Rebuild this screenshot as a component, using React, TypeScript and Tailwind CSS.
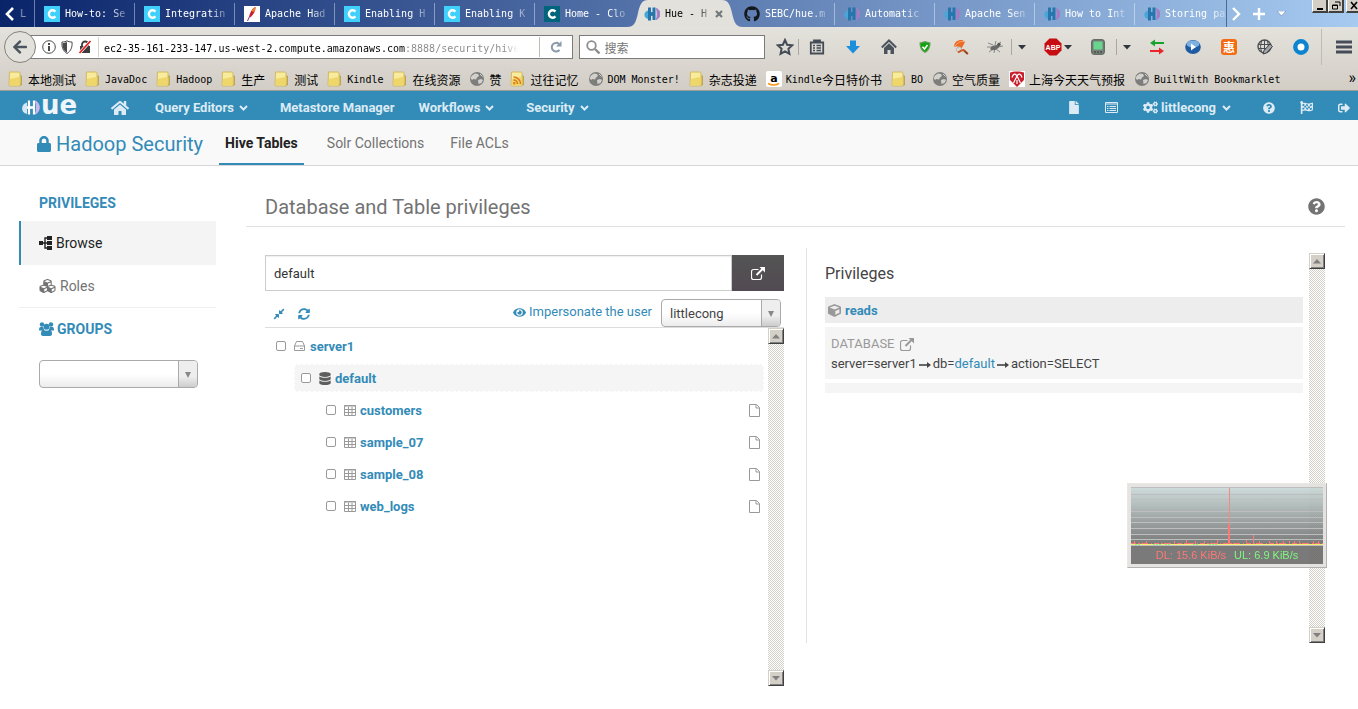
import React, { useState } from "react";
import {
  FaArrowLeft,
  FaCogs,
  FaCompressAlt,
  FaCube,
  FaCubes,
  FaDatabase,
  FaEye,
  FaFile,
  FaFlagCheckered,
  FaGithub,
  FaHome,
  FaLock,
  FaQuestionCircle,
  FaSignOutAlt,
  FaSyncAlt,
} from "react-icons/fa";

/* Latin runs sit in a 6px monospace cell, CJK runs in a 12px cell. */
function Mixed({ text }: { text: string }) {
  const runs = text.match(/[\x00-\x7f]+|[^\x00-\x7f]+/g) ?? [];
  return (
    <span className="flex items-center pt-[2px] whitespace-pre">
      {runs.map((r, i) =>
        r.charCodeAt(0) < 128 ? (
          <span key={i} className="font-['DejaVu_Sans_Mono',monospace] text-[10px]">{r}</span>
        ) : (
          <span key={i} className="font-['Noto_Sans_CJK_SC',sans-serif] text-xs leading-4">{r}</span>
        )
      )}
    </span>
  );
}

/* ---------- favicons ---------- */

const ClouderaIcon = ({ dark = false }: { dark?: boolean }) => (
  <svg viewBox="0 0 16 16" className="size-4 shrink-0">
    <rect width="16" height="16" fill={dark ? "#00657c" : "#3fd0fb"} />
    <path d="M11.4 5.6A3.7 3.7 0 1 0 11.4 10.4" fill="none" stroke="#fff" strokeWidth="2.4" />
  </svg>
);

const FeatherIcon = () => (
  <svg viewBox="0 0 16 16" className="size-4 shrink-0">
    <rect width="16" height="16" fill="#fff" />
    <path d="M11.5 1C8.500 2 6 6 5 11l1 .5C9.500 9 11.700 4.500 11.500 1z" fill="#c8202f" />
    <path d="M11.500 1C10 1.500 8.700 3 7.500 5l2.500 1c1-1.800 1.600-3.500 1.500-5z" fill="#f0842c" />
    <path d="M5.500 10.500L3.500 15" stroke="#8a3080" strokeWidth="1" />
  </svg>
);

const HueIcon = () => (
  <svg viewBox="0 0 16 16" className="size-4 shrink-0">
    <path d="M4.500 4.500C-1 5.500-1 12 4.500 13z" fill="#4aa5d8" />
    <path d="M5.500 1.500v5.500M5.500 9v5.500M10 1.500v12.500" stroke="#2676ad" strokeWidth="3" />
    <path d="M4 8h7" stroke="#2676ad" strokeWidth="3.800" />
    <path d="M12.500 2.500c4.500 2 4.500 9 0 11 1-3.500 1-7.500 0-11z" fill="#a57cc4" stroke="#a57cc4" />
  </svg>
);

type Tab = { title: string; icon: React.ReactNode; active?: boolean };

const TABS: Tab[] = [
  { title: "How-to: Se", icon: <ClouderaIcon /> },
  { title: "Integratin", icon: <ClouderaIcon /> },
  { title: "Apache Had", icon: <FeatherIcon /> },
  { title: "Enabling H", icon: <ClouderaIcon /> },
  { title: "Enabling K", icon: <ClouderaIcon /> },
  { title: "Home - Clo", icon: <ClouderaIcon dark /> },
  { title: "Hue - H", icon: <HueIcon />, active: true },
  { title: "SEBC/hue.m", icon: <FaGithub className="size-4 shrink-0 text-[#14181c]" /> },
  { title: "Automatic", icon: <HueIcon /> },
  { title: "Apache Sen", icon: <HueIcon /> },
  { title: "How to Int", icon: <HueIcon /> },
  { title: "Storing pa", icon: <HueIcon /> },
];

function TabStrip() {
  return (
    <div className="flex h-[27px] bg-[linear-gradient(90deg,#0a246a,#a6caf0)] text-white">
      <button aria-label="Scroll tabs left" className="flex w-5 shrink-0 items-center justify-center">
        <svg viewBox="0 0 10 14" className="h-[14px] w-[10px]"><path d="M8 1L2 7l6 6" fill="none" stroke="#fff" strokeWidth="2.600" /></svg>
      </button>
      <div className="flex w-[15px] shrink-0 items-center border-r border-white/40 font-['DejaVu_Sans_Mono',monospace] text-[10px] text-white/50">L</div>
      <div className="flex min-w-0 flex-1 overflow-hidden">
        {TABS.map((t, i) => (
          <button
            key={t.title}
            className={
              t.active
                ? "relative flex w-[100px] shrink-0 items-center gap-[5px] pl-[9px] text-black"
                : "flex w-[100px] shrink-0 items-center gap-[5px] pl-[9px]"
            }
          >
            {t.active && (
              <svg viewBox="0 0 116 27" className="absolute top-0 -left-2 h-[27px] w-[116px]">
                <path d="M0 27C8 27 9 21 11 13 13 4 15 0 21 0h74c6 0 8 4 10 13 2 8 3 14 11 14z" fill="#e3e1db" />
              </svg>
            )}
            <span className="relative">{t.icon}</span>
            <span className="relative text-left whitespace-pre font-['DejaVu_Sans_Mono',monospace] text-[10px] [mask-image:linear-gradient(90deg,#000_75%,#0005)]">
              {t.title}
            </span>
            {t.active ? (
              <svg viewBox="0 0 8 8" className="relative ml-[3px] size-2"><path d="M1 1l6 6M7 1L1 7" stroke="#737a7a" strokeWidth="2.200" /></svg>
            ) : (
              i !== 5 && <span className="ml-auto h-[22px] w-px bg-white/40" />
            )}
          </button>
        ))}
      </div>
      <div className="flex w-[132px] shrink-0 justify-between border-l border-[#4a6a9a]">
        <div className="flex items-center gap-3 pl-1">
          <svg viewBox="0 0 10 14" className="h-[14px] w-[10px]"><path d="M2 1l6 6-6 6" fill="none" stroke="#fff" strokeWidth="2.400" /></svg>
          <button aria-label="New tab">
            <svg viewBox="0 0 12 12" className="size-3"><path d="M6 0v12M0 6h12" stroke="#fff" strokeWidth="2.400" /></svg>
          </button>
          <svg viewBox="0 0 9 6" className="h-[6px] w-[9px]"><path d="M0 0h9L4.500 5z" fill="#fff" stroke="#56749f" strokeWidth=".5" /></svg>
        </div>
        <div className="flex h-[13px] text-black">
          {[
            <path key="m" d="M4 9h6" stroke="#000" strokeWidth="2" />,
            <path key="r" d="M6 2h5v4M3.500 5h5v4h-5zM3 5.500h6" fill="none" stroke="#000" />,
            <path key="c" d="M4 2l6 7M10 2L4 9" stroke="#000" strokeWidth="1.600" />,
          ].map((p, i) => (
            <button
              key={i}
              aria-label={["Minimize", "Restore", "Close"][i]}
              className={
                i === 2
                  ? "ml-[2px] w-3 overflow-hidden border-b-2 border-l border-b-[#404040] border-l-white bg-[#d4d0c8]"
                  : "w-4 overflow-hidden border-r-2 border-b-2 border-l border-r-[#404040] border-b-[#404040] border-l-white bg-[#d4d0c8]"
              }
            >
              <svg viewBox="0 0 14 11" className="h-[11px] w-[14px]">{p}</svg>
            </button>
          ))}
        </div>
      </div>
    </div>
  );
}

/* ---------- address bar ---------- */

const Caret = () => (
  <svg viewBox="0 0 8 5" className="h-[5px] w-2"><path d="M0 0h8L4 4.500z" fill="#30363c" /></svg>
);

const Divider = () => <span className="h-4 w-px shrink-0 bg-[#aaa7a0]" />;

function Cell({ label, narrow = false, children }: { label: string; narrow?: boolean; children: React.ReactNode }) {
  return (
    <button
      aria-label={label}
      className={narrow ? "flex w-8 shrink-0 items-center justify-center" : "flex w-9 shrink-0 items-center justify-center"}
    >
      {children}
    </button>
  );
}

function Toolbar() {
  return (
    <div className="flex h-10 items-center bg-[linear-gradient(#e4e2dc,#d9d5ce)] pl-1">
      <button aria-label="Back" className="z-10 flex size-8 shrink-0 items-center justify-center rounded-full border border-[#85827c] bg-[#e3e1dc]">
        <FaArrowLeft className="size-4 text-[#4a545e]" />
      </button>
      <div className="-ml-2 flex h-6 min-w-0 flex-[546] items-center border border-[#7b7b7b] bg-white pl-[13px]">
        <svg viewBox="0 0 52 14" className="h-[14px] w-[52px] shrink-0">
          <circle cx="7" cy="7" r="6.300" fill="none" stroke="#4a4a4a" />
          <path d="M7 3v2M7 6v5" stroke="#333" strokeWidth="1.800" />
          <path d="M20 2c2 0 4-.4 5-1.200C26 1.600 28 2 30 2c.5 5-1 9-5 11.500C21 11 19.500 7 20 2z" fill="#fff" stroke="#4a4a4a" />
          <path d="M20.500 3.200c1.500-.1 3-.4 4.500-1.200v10.500c-3.500-2.300-4.700-5-4.500-9.300z" fill="#4a4a4a" />
          <path d="M38 6h10v7H38z" fill="#3c3c3c" />
          <path d="M40 7V4.500a3 3 0 0 1 6 0V7" fill="none" stroke="#3c3c3c" strokeWidth="1.800" />
          <path d="M37.500 13L48.500 1" stroke="#fff" strokeWidth="3" />
          <path d="M37.500 13L48.500 1" stroke="#e02020" strokeWidth="1.800" />
        </svg>
        <span className="mr-[5px] ml-1 h-5 w-px shrink-0 bg-[#d9d0c8]" />
        <input
          aria-label="Address"
          defaultValue="ec2-35-161-233-147.us-west-2.compute.amazonaws.com:8888/security/hive"
          className="min-w-0 flex-1 bg-[linear-gradient(90deg,#000_301px,#888_301px,#888_400px,transparent_414px)] bg-clip-text pt-[2px] font-['DejaVu_Sans_Mono',monospace] text-[10px] text-transparent outline-none"
        />
        <span className="ml-5 h-5 w-px shrink-0 bg-[#b9c0b0]" />
        <button aria-label="Reload" className="flex w-8 shrink-0 justify-center">
          <svg viewBox="0 0 12 12" className="size-3">
            <path d="M9.500 8.800A4.300 4.300 0 1 1 9 3" fill="none" stroke="#8a9aa8" strokeWidth="2" />
            <path d="M11.500 0v5.500H6z" fill="#8a9aa8" />
          </svg>
        </button>
      </div>
      <label className="ml-[6px] flex h-6 min-w-0 flex-[184] items-center gap-[5px] border border-[#7b7b7b] bg-white pl-[6px]">
        <svg viewBox="0 0 14 14" className="size-[14px] shrink-0">
          <circle cx="5.500" cy="5.500" r="4.300" fill="none" stroke="#8e8e8e" strokeWidth="1.800" />
          <path d="M9 9l4.500 4.500" stroke="#8e8e8e" strokeWidth="2.400" />
        </svg>
        <input placeholder="搜索" aria-label="搜索" className="min-w-0 flex-1 pt-[2px] font-['Noto_Sans_CJK_SC',sans-serif] text-xs text-[#555] outline-none placeholder:text-[#757575]" />
      </label>
      <div className="flex shrink-0 items-center pl-[3px]">
        <button aria-label="Bookmark this page" className="flex w-[30px] justify-center pl-1">
          <svg viewBox="0 0 18 18" className="size-[18px]"><path d="M9 2l2.100 4.700 5 .6-3.700 3.500 1 5L9 13.300l-4.400 2.500 1-5L1.900 7.300l5-.6z" fill="none" stroke="#444d56" strokeWidth="2" /></svg>
        </button>
        <Divider />
        <Cell label="Bookmarks">
          <svg viewBox="0 0 16 16" className="size-4"><path d="M5 3V1.500h6V3M1.800 3.500h12.400v11H1.800z" fill="none" stroke="#444d56" strokeWidth="1.800" /><path d="M4 6.500h2M7.500 6.500H12M4 9h2M7.500 9H12M4 11.500h2M7.500 11.500H12" stroke="#444d56" strokeWidth="1.300" /></svg>
        </Cell>
        <Cell label="Downloads">
          <svg viewBox="0 0 16 16" className="size-4"><path d="M5 1.500h6V7h4l-7 7.500L1 7h4z" fill="#1c8fdc" /></svg>
        </Cell>
        <Cell label="Home">
          <svg viewBox="0 0 16 16" className="size-4"><path d="M.8 8.500L8 1.500l7.200 7" fill="none" stroke="#4b545c" strokeWidth="2" /><path d="M3 9l5-4.800L13 9v6H9.500v-4h-3v4H3z" fill="#4b545c" /></svg>
        </Cell>
        <Cell label="Site safety">
          <svg viewBox="0 0 12 12" className="size-3"><path d="M6 0l5.500 1.500C11.500 7 10 10 6 12 2 10 .5 7 .5 1.500z" fill="#6aa05c" /><path d="M6 1.200l4.400 1.200C10.300 6.500 9 9 6 10.700 3 9 1.700 6.500 1.600 2.400z" fill="#12a212" /><path d="M3.500 5.800L5.500 8l3-4" fill="none" stroke="#fff" strokeWidth="1.500" /></svg>
        </Cell>
        <Cell label="Search helper">
          <svg viewBox="0 0 16 16" className="size-4"><path d="M1 8C1 3 5 .5 9.500 1L12 3 8.500 9.500C6 7.500 3.500 7 1 8z" fill="#ee6a24" /><path d="M1.500 7.500C5 3 8 2 11 2.500" fill="none" stroke="#fbb27c" /><circle cx="6" cy="10.500" r="2.600" fill="#ddd8d0" stroke="#b9b4ac" /><path d="M5 13.500C8 11.500 9 11 10.500 11l4.500 4" fill="none" stroke="#d0561f" strokeWidth="2" /><path d="M11.500 12l3 3" stroke="#7a4428" strokeWidth="1.400" /></svg>
        </Cell>
        <Cell label="Firebug" narrow>
          <svg viewBox="0 0 16 14" className="h-[14px] w-4"><path d="M1 3l5 2M0 7h5M2 12l4-3M9 1L8 5M14 2l-4 3M16 6l-5 1M13 12l-4-3M7 13l1-4" stroke="#888" /><ellipse cx="7.500" cy="7.500" rx="4.500" ry="2.200" fill="#6a6a6a" transform="rotate(-20 8 7)" /><circle cx="12" cy="4.500" r="1.700" fill="#555" /></svg>
        </Cell>
        <Divider />
        <button aria-label="Firebug menu" className="flex w-[22px] justify-center pr-[3px]"><Caret /></button>
        <button aria-label="Adblock" className="flex w-[46px] items-center gap-[2px] pl-[10px]">
          <svg viewBox="0 0 18 18" className="size-[18px]"><path d="M5.500.5h7l5 5v7l-5 5h-7l-5-5v-7z" fill="#c70d12" /><text x="9" y="12" textAnchor="middle" fontSize="7" fontWeight="700" fill="#fff" fontFamily="Liberation Sans, sans-serif">ABP</text></svg>
          <Caret />
        </button>
        <Cell label="Device view">
          <svg viewBox="0 0 14 16" className="h-4 w-[14px]"><rect x=".7" y=".7" width="12.600" height="14.600" rx="2" fill="#77827a" stroke="#4f5852" /><rect x="2.500" y="2.500" width="9" height="8" fill="#68d68c" /><path d="M3 13h2M6 13h2M9 13h2" stroke="#333" /></svg>
        </Cell>
        <Divider />
        <button aria-label="Device menu" className="flex w-[22px] justify-center pr-[3px]"><Caret /></button>
        <Cell label="Proxy">
          <svg viewBox="0 0 14 16" className="h-4 w-[14px]"><path d="M4 4h10" stroke="#18a42c" strokeWidth="2" /><path d="M0 12h10" stroke="#e8262c" strokeWidth="2" /><path d="M0 4l5-3.500v7z" fill="#18a42c" /><path d="M14 12L9 8.500v7z" fill="#e8262c" /></svg>
        </Cell>
        <Cell label="Video">
          <svg viewBox="0 0 16 16" className="size-4"><ellipse cx="8" cy="8" rx="7.800" ry="7" fill="#1f5ba0" /><ellipse cx="8" cy="5" rx="6.500" ry="3.500" fill="#7eb0e2" /><path d="M6 4.500l5 3.500-5 3.500z" fill="#fff" /></svg>
        </Cell>
        <Cell label="Deals">
          <span className="flex size-4 items-center justify-center rounded-[3px] bg-[#f36c12] font-['Noto_Sans_CJK_SC',sans-serif] text-xs leading-4 font-bold text-white">惠</span>
        </Cell>
        <Cell label="Web tools">
          <svg viewBox="0 0 16 16" className="size-4"><circle cx="7.500" cy="7.500" r="6.500" fill="none" stroke="#4b4f54" strokeWidth="1.400" /><path d="M1 5.500h13M1 9.500h13M7.500 1v13M4.500 2Q2.500 7.500 4.500 13M10.500 2q2 5.500 0 11" fill="none" stroke="#4b4f54" /><path d="M6 15l1-3.500L13 5l2.500 2.500-6 6.500z" fill="#a3a5a7" stroke="#3c4044" /></svg>
        </Cell>
        <Cell label="Sync">
          <svg viewBox="0 0 16 16" className="size-4"><circle cx="8" cy="8" r="5.700" fill="#fff" stroke="#0c84cf" strokeWidth="4.400" /></svg>
        </Cell>
        <span className="ml-[2px] h-9 w-px bg-[#c0bcb4]" />
        <button aria-label="Open menu" className="flex w-9 justify-center pl-2">
          <svg viewBox="0 0 16 14" className="h-[14px] w-4"><path d="M0 2h16M0 7h16M0 12h16" stroke="#464c58" strokeWidth="3" /></svg>
        </button>
      </div>
    </div>
  );
}

/* ---------- bookmarks ---------- */

const Folder = ({ feed = false }: { feed?: boolean }) => (
  <svg viewBox="0 0 16 16" className="size-4 shrink-0">
    <path d="M11 5h2.500v9H11z" fill="#e2c65a" stroke="#b89a38" strokeWidth=".8" />
    <path d="M1.500 1h9.500c.6 0 1 .4 1 1v13h-10c-.6 0-1-.4-1-1z" fill="#f8eb9c" stroke="#cfb459" strokeWidth=".9" />
    <path d="M2 8l9-2v8H2z" fill="#eed668" />
    {feed && (
      <g fill="none" stroke="#e07a18" strokeWidth="1.600">
        <path d="M3.500 6a7 7 0 0 1 7 7M3.500 9a4 4 0 0 1 4 4" />
        <circle cx="4.300" cy="12.300" r=".5" />
      </g>
    )}
  </svg>
);

const Globe = () => (
  <svg viewBox="0 0 16 16" className="size-4 shrink-0">
    <circle cx="8" cy="8" r="7" fill="#7d7d7b" />
    <path d="M3 4.500l3-2 3 .5 1 2-2 1.500-1 2-2.500-.5L3 9 1.500 7zM9 9l3-1 2 1-1.500 3L9.500 13z" fill="#d3d1cc" />
    <path d="M11 3l2.500 2.500" stroke="#d3d1cc" />
  </svg>
);

const Amazon = () => (
  <svg viewBox="0 0 16 16" className="size-4 shrink-0">
    <rect width="16" height="16" rx="2" fill="#fff" />
    <text x="8" y="11" textAnchor="middle" fontSize="11" fontWeight="700" fontFamily="DejaVu Sans, sans-serif">a</text>
    <path d="M2 12.500q6 3 11 0" fill="none" stroke="#f79a1d" strokeWidth="1.500" />
  </svg>
);

const Weather = () => (
  <svg viewBox="0 0 16 16" className="size-4 shrink-0">
    <rect width="16" height="16" fill="#fff" />
    <path d="M1 1.500C4 0 12 0 15 1.500V9l-7 7L1 9z" fill="#c91f2c" />
    <path d="M3 6.500C4 2.500 6.500 2 8 5c1.500-3 4-2.500 5 1.500M8 5L4.500 12M8 5l3.500 7M8 9v4" fill="none" stroke="#fff" strokeWidth="1.200" />
  </svg>
);

const BOOKMARKS: { text: string; icon: React.ReactNode }[] = [
  { text: "本地测试", icon: <Folder /> },
  { text: "JavaDoc", icon: <Folder /> },
  { text: "Hadoop", icon: <Folder /> },
  { text: "生产", icon: <Folder /> },
  { text: "测试", icon: <Folder /> },
  { text: "Kindle", icon: <Folder /> },
  { text: "在线资源", icon: <Folder /> },
  { text: "赞", icon: <Globe /> },
  { text: "过往记忆", icon: <Folder feed /> },
  { text: "DOM Monster!", icon: <Globe /> },
  { text: "杂志投递", icon: <Folder /> },
  { text: "Kindle今日特价书", icon: <Amazon /> },
  { text: "BO", icon: <Folder /> },
  { text: "空气质量", icon: <Globe /> },
  { text: "上海今天天气预报", icon: <Weather /> },
  { text: "BuiltWith Bookmarklet", icon: <Globe /> },
];

function BookmarkBar() {
  return (
    <div className="flex h-6 items-center border-b border-[#9b9c9a] bg-[linear-gradient(#d9d5ce,#d2cec6)] pr-[2px] pl-2">
      <div className="flex min-w-0 flex-1 gap-[9px] overflow-hidden">
        {BOOKMARKS.map((b) => (
          <a key={b.text} href="#" className="flex shrink-0 items-center gap-1 text-black">
            {b.icon}
            <Mixed text={b.text} />
          </a>
        ))}
      </div>
      <button aria-label="More bookmarks" className="pb-[2px] text-base leading-4">»</button>
    </div>
  );
}

/* ---------- page icons ---------- */

const Chevron = () => (
  <svg viewBox="0 0 9 9" className="size-[9px]"><path d="M1 3l3.500 3.500L8 3" fill="none" stroke="currentColor" strokeWidth="2" /></svg>
);

const ListIcon = () => (
  <svg viewBox="0 0 13 11" className="h-[11px] w-[13px]">
    <path d="M.5.5h12v10H.5zM.5 2h12" fill="none" stroke="currentColor" />
    <path d="M2 4.500h1.500M4.500 4.500H11M2 6.500h1.500M4.500 6.500H11M2 8.500h1.500M4.500 8.500H11" stroke="currentColor" />
  </svg>
);

const LinkOut = () => (
  <svg viewBox="0 0 14 13" className="h-[13px] w-[14px]">
    <path d="M7.500 2.500H2.500a2 2 0 0 0-2 2v6a2 2 0 0 0 2 2h6a2 2 0 0 0 2-2V7.500" fill="none" stroke="currentColor" strokeWidth="1.200" />
    <path d="M5.500 8L11.500 2" stroke="currentColor" strokeWidth="2" />
    <path d="M8.500 0H14v5.500z" fill="currentColor" />
  </svg>
);

const TreeIcon = () => (
  <svg viewBox="0 0 13 14" className="h-[14px] w-[13px]">
    <path d="M0 5h4v4H0zM8 0h5v4H8zM8 5h5v4H8zM8 10h5v4H8z" fill="currentColor" />
    <path d="M4 7h4M8 2H6v10h2" fill="none" stroke="currentColor" strokeWidth="1.400" />
  </svg>
);

const GroupIcon = () => (
  <svg viewBox="0 0 15 14" className="h-[14px] w-[15px]" fill="currentColor">
    <circle cx="3" cy="2.500" r="2.200" />
    <circle cx="12" cy="2.500" r="2.200" />
    <path d="M0 8.500C0 6.500.5 5 1.500 5H4l1.500 3.500zM15 8.500C15 6.500 14.500 5 13.500 5H11L9.500 8.500z" />
    <circle cx="7.500" cy="4.800" r="3" />
    <path d="M2 12c0-3 1-4.300 2.500-4.300C6 9 9 9 10.500 7.700 12 7.700 13 9 13 12c0 1.300-.8 2-2 2H4c-1.200 0-2-.7-2-2z" />
  </svg>
);

const GridIcon = () => (
  <svg viewBox="0 0 12 11" className="h-[11px] w-3">
    <path d="M.5.5h11v10H.5zM0 1h12M.5 4.500h11M.5 7.500h11M4.500 2v8.500M8 2v8.500" fill="none" stroke="#999" />
  </svg>
);

const PageIcon = () => (
  <svg viewBox="0 0 11 13" className="h-[13px] w-[11px]">
    <path d="M.5.5h7l3 3v9H.5zM7 .5V4h3.500" fill="none" stroke="#999" />
  </svg>
);

const DriveIcon = () => (
  <svg viewBox="0 0 11 10" className="h-[10px] w-[11px]">
    <path d="M.5 5L2.500.5h6L10.500 5v4.500H.5zM.5 5h10" fill="none" stroke="#999" />
    <path d="M6 7.500h3" stroke="#999" />
  </svg>
);

const DatabaseIcon = () => <FaDatabase className="h-[13px] w-3 text-[#5e5e5e]" />;

const ArrowIcon = () => (
  <svg viewBox="0 0 12 6" className="mx-[2px] mt-px h-[6px] w-3"><path d="M0 3h9" stroke="currentColor" strokeWidth="1.600" /><path d="M8 0l4 3-4 3z" fill="currentColor" /></svg>
);

/* ---------- Hue ---------- */

function HueLogo() {
  return (
    <a href="#" aria-label="Hue home" className="flex w-14 items-center">
      <svg viewBox="0 0 19 15" className="h-[15px] w-[19px] shrink-0">
        <path d="M5 2.500C-1.500 4-1.500 13 5 14z" fill="#d6e8f4" />
        <path d="M7 .5v14M12 .5v14" stroke="#fff" strokeWidth="2.200" />
        <path d="M5 7.500h7" stroke="#fff" strokeWidth="2.600" />
        <path d="M13.500 1c5 2.500 5 10.500 0 13 1.400-4 1.400-9 0-13z" fill="#cbb9ee" stroke="#cbb9ee" />
      </svg>
      <span className="-mt-[5px] font-['DejaVu_Sans',sans-serif] text-[26px] leading-5 font-bold text-[#eef6fb]">ue</span>
    </a>
  );
}

function NavLink({ children, menu = false }: { children: React.ReactNode; menu?: boolean }) {
  return (
    <a href="#" className={menu ? "flex items-center gap-[5px] pr-5 pl-3" : "flex items-center px-3"}>
      {children}
      {menu && <Chevron />}
    </a>
  );
}

function HueNav() {
  return (
    <nav className="flex h-[29px] items-center bg-[#338bb8] pt-1 pr-2 pl-[22px] text-[13px] font-bold text-[#dcebf4]">
      <HueLogo />
      <a href="#" aria-label="Home" className="mr-[14px] ml-[33px]"><FaHome className="size-[18px]" /></a>
      <NavLink menu>Query Editors</NavLink>
      <NavLink>Metastore Manager</NavLink>
      <NavLink menu>Workflows</NavLink>
      <NavLink menu>Security</NavLink>
      <div className="ml-auto flex items-center">
        <a href="#" aria-label="Documents" className="mr-6"><FaFile className="h-[13px] w-[14px]" /></a>
        <a href="#" aria-label="Jobs" className="mr-[25px]"><ListIcon /></a>
        <a href="#" className="flex items-center">
          <FaCogs className="size-[15px]" />
          <span className="mr-[6px] ml-[3px]">littlecong</span>
          <Chevron />
        </a>
        <a href="#" aria-label="Help" className="ml-8"><FaQuestionCircle className="size-3" /></a>
        <a href="#" aria-label="Tour" className="ml-[25px]"><FaFlagCheckered className="size-[13px]" /></a>
        <a href="#" aria-label="Sign out" className="ml-[25px]"><FaSignOutAlt className="size-3" /></a>
      </div>
    </nav>
  );
}

function SubNav() {
  return (
    <header className="flex h-[46px] border-b border-[#d8d8d8] bg-[#f9f9f9] pl-9 text-sm">
      <h1 className="mr-[16px] flex items-center gap-1 pt-[3px] text-xl text-[#338bb8]">
        <FaLock className="size-4" />
        Hadoop Security
      </h1>
      <a href="#" className="flex items-center border-b-2 border-[#338bb8] px-[6px] pt-[3px] font-bold text-[#222]">Hive Tables</a>
      <a href="#" className="ml-[23px] flex items-center pt-px text-[#737373]">Solr Collections</a>
      <a href="#" className="ml-[26px] flex items-center pt-px text-[#737373]">File ACLs</a>
    </header>
  );
}

function Picker({ label, options, wide = false }: { label: string; options: string[]; wide?: boolean }) {
  return (
    <span className={wide ? "relative flex h-7 w-[159px]" : "relative flex h-7 w-[120px]"}>
      <select
        aria-label={label}
        className="w-full appearance-none rounded border border-[#aaa] bg-[linear-gradient(#fff_50%,#ececec)] pt-px pr-5 pl-2 text-[13px] text-[#444] outline-none"
      >
        {options.map((o) => (
          <option key={o}>{o}</option>
        ))}
      </select>
      <span className="pointer-events-none absolute inset-y-px right-px flex w-[19px] items-center justify-center rounded-r-[3px] border-l border-[#aaa] bg-[linear-gradient(#eee_60%,#ccc)]">
        <svg viewBox="0 0 6 6" className="mt-[2px] size-[6px]"><path d="M0 0h6L3 6z" fill="#888" /></svg>
      </span>
    </span>
  );
}

function Sidebar() {
  return (
    <aside className="w-[197px] shrink-0 pt-[18px] text-sm">
      <h2 className="flex h-[37px] items-center pl-5 font-bold text-[#338bb8]">PRIVILEGES</h2>
      <a href="#" className="flex h-11 items-center gap-1 border-l-2 border-[#338bb8] bg-[#f4f4f4] pl-[18px] text-[#222]">
        <TreeIcon />
        Browse
      </a>
      <a href="#" className="flex h-[43px] items-center gap-1 border-b border-[#f0f0f0] pl-5 text-[#737373]">
        <FaCubes className="h-4 w-[17px]" />
        Roles
      </a>
      <h2 className="flex h-[42px] items-center gap-[3px] pl-5 font-bold text-[#338bb8]">
        <GroupIcon />
        GROUPS
      </h2>
      <div className="mt-[10px] pl-5"><Picker label="Group" options={[""]} wide /></div>
    </aside>
  );
}

function ScrollBar({ name }: { name: string }) {
  const end = "flex size-4 shrink-0 items-center justify-center border border-t-[#d4d0c8] border-l-[#d4d0c8] border-r-[#404040] border-b-[#404040] bg-[#d4d0c8] shadow-[inset_1px_1px_#fff,inset_-1px_-1px_#808080]";
  return (
    <div className="flex w-4 shrink-0 flex-col">
      <button aria-label="Scroll up" className={end}><svg viewBox="0 0 8 5" className="h-[5px] w-2"><path d="M0 4.500h8L4 0z" fill="#808080" /></svg></button>
      <svg className="min-h-0 w-4 flex-1" shapeRendering="crispEdges">
        <pattern id={name} width="2" height="2" patternUnits="userSpaceOnUse">
          <path d="M0 0h2v2H0z" fill="#fff" />
          <path d="M0 0h1v1H0zM1 1h1v1H1z" fill="#d4d0c8" />
        </pattern>
        <rect width="100%" height="100%" fill={"url(#" + name + ")"} />
      </svg>
      <button aria-label="Scroll down" className={end}><svg viewBox="0 0 8 5" className="h-[5px] w-2"><path d="M0 0h8L4 4.500z" fill="#808080" /></svg></button>
    </div>
  );
}

function Tick({ label }: { label: string }) {
  return <input type="checkbox" aria-label={label} className="size-[10px] appearance-none rounded-[2px] border border-[#999] bg-white checked:bg-[#338bb8]" />;
}

function BrowsePanel() {
  const [path, setPath] = useState("default");
  return (
    <section className="flex w-[519px] flex-col pt-[7px]">
      <div className="flex h-9">
        <input
          aria-label="Path"
          value={path}
          onChange={(e) => setPath(e.target.value)}
          className="min-w-0 flex-1 border border-[#ccc] px-2 pt-px text-[13px] text-[#333] shadow-[inset_0_1px_1px_#0001] outline-none"
        />
        <button aria-label="Open" className="flex w-[52px] items-center justify-center bg-[linear-gradient(#545454,#514a52)] text-white">
          <LinkOut />
        </button>
      </div>
      <div className="flex h-[37px] items-end border-b border-[#ddd] pr-[3px] pl-2 text-[#338bb8]">
        <button aria-label="Collapse" className="mb-[7px]"><FaCompressAlt className="size-3" /></button>
        <button aria-label="Refresh" className="mb-[7px] ml-[13px]"><FaSyncAlt className="size-3" /></button>
        <a href="#" className="mr-[9px] mb-[5px] ml-auto flex items-center gap-[3px] text-[13px] leading-5">
          <FaEye className="size-[13px]" />
          Impersonate the user
        </a>
        <Picker label="User" options={["littlecong"]} />
      </div>
      <div className="flex h-[358px]">
        <ul className="min-w-0 flex-1 pt-[2px] pr-[4px] text-[13px] font-bold text-[#338bb8]">
          <li className="flex h-8 items-center pl-[11px]">
            <Tick label="server1" />
            <span className="mr-1 ml-2 flex w-3"><DriveIcon /></span>
            <a href="#" className="pt-[2px]">server1</a>
          </li>
          <li className="my-[2px] ml-[29px] flex h-7 items-center rounded border border-dashed border-white bg-[#f5f5f5] pl-[6px]">
            <Tick label="default" />
            <span className="mr-1 ml-2"><DatabaseIcon /></span>
            <a href="#" className="pt-[2px]">default</a>
          </li>
          {["customers", "sample_07", "sample_08", "web_logs"].map((t) => (
            <li key={t} className="flex h-8 items-center pr-1 pl-[61px]">
              <Tick label={t} />
              <span className="mr-1 ml-2"><GridIcon /></span>
              <a href="#" className="pt-[2px]">{t}</a>
              <button aria-label={"View " + t} className="ml-auto"><PageIcon /></button>
            </li>
          ))}
        </ul>
        <ScrollBar name="track-tree" />
      </div>
    </section>
  );
}

function PrivilegesPanel() {
  return (
    <section className="ml-[22px] flex h-[395px] flex-1 border-l border-[#e2e2e2] pt-[5px] pr-5 pl-[18px]">
      <div className="mr-[6px] flex-1 text-[13px] text-[#444]">
        <h3 className="pt-[9px] text-base leading-6">Privileges</h3>
        <div className="mt-[11px] flex h-[26px] items-center gap-1 bg-[#ededed] pt-px pl-[3px] font-bold text-[#338bb8]">
          <FaCube className="size-[13px] text-[#999]" />
          <a href="#">reads</a>
        </div>
        <div className="mt-1 h-[52px] bg-[#f5f5f5] px-[6px] pt-[7px] leading-5">
          <div className="flex items-center gap-[6px] text-[#999]">
            DATABASE <LinkOut />
          </div>
          <div className="flex items-center">
            server=server1
            <ArrowIcon />
            db=<a href="#" className="text-[#338bb8]">default</a>
            <ArrowIcon />
            action=SELECT
          </div>
        </div>
        <div className="mt-1 h-[10px] bg-[#f5f5f5]" />
      </div>
      <ScrollBar name="track-privileges" />
    </section>
  );
}

function TrafficMeter() {
  return (
    <div className="absolute top-[483px] right-[31px] w-[200px] border border-t-[#e6e5e2] border-l-[#e6e5e2] border-r-[#aaa] border-b-[#aaa] bg-[#e4e2df] p-[3px] opacity-90">
      <svg viewBox="0 0 192 59" className="block h-[59px] w-full" preserveAspectRatio="none">
        <defs>
          <linearGradient id="meter" x1="0" y1="0" x2="0" y2="1">
            <stop offset="0" stopColor="#c9d9d8" />
            <stop offset="1" stopColor="#6a6a6a" />
          </linearGradient>
        </defs>
        <rect width="192" height="59" fill="url(#meter)" />
        <path d="M0 .5h192M0 7.500h192M0 12.500h192M0 24.500h192M0 30.500h192M0 35.500h192M0 41.500h192M0 47.500h192M0 52.500h192M0 58.500h192" stroke="#b8b8b8" />
        <path d="M98.500 1v56" stroke="#f77a78" />
        <path d="M98 38v19" stroke="#ff6a68" strokeWidth="2" />
        <path d="M0 56.500h192" stroke="#ff6a68" strokeWidth="1" strokeDasharray="5 2 2 1 7 3 1 2" />
        <path d="M3.500 54v3M15.500 54v3M43.500 54v3M55.500 53v4M64.500 54v3M73.500 54v3M86.500 53v4M115.500 53v4M122.500 48v9M128.500 54v3M138.500 54v3M145.500 54v3M152.500 54v3M158.500 54v3M163.500 54v3M168.500 54v3M182.500 54v3M187.500 54v3" stroke="#ff6a68" />
        <path d="M0 57.500h192" stroke="#f7f060" />
        <path d="M4 57.500h6M22 57.500h8M34 57.500h5M62 57.500h6M78 57.500h8" stroke="#7cf584" strokeDasharray="2 1" />
      </svg>
      <div className="flex h-[18px] items-center justify-center gap-2 bg-[#6c6c6c] font-['Liberation_Sans',sans-serif] text-[11px] leading-4">
        <span className="text-[#ff6a68]">DL: 15.6 KiB/s</span>
        <span className="text-[#6efa6e]">UL: 6.9 KiB/s</span>
      </div>
    </div>
  );
}

export default function App() {
  return (
    <div className="relative min-h-screen overflow-hidden bg-white font-[Roboto,sans-serif]">
      <TabStrip />
      <Toolbar />
      <BookmarkBar />
      <HueNav />
      <SubNav />
      <div className="flex pr-[13px] pl-[19px]">
        <Sidebar />
        <main className="ml-[30px] min-w-0 flex-1">
          <div className="flex h-[61px] items-end justify-between border-b border-[#e2e2e2] pr-5 pb-[7px] pl-[19px] text-[#737373]">
            <h2 className="text-xl leading-6">Database and Table privileges</h2>
            <button aria-label="Help" className="mb-1"><FaQuestionCircle className="size-[17px]" /></button>
          </div>
          <div className="mt-[21px] flex pl-[19px]">
            <BrowsePanel />
            <PrivilegesPanel />
          </div>
        </main>
      </div>
      <TrafficMeter />
    </div>
  );
}
